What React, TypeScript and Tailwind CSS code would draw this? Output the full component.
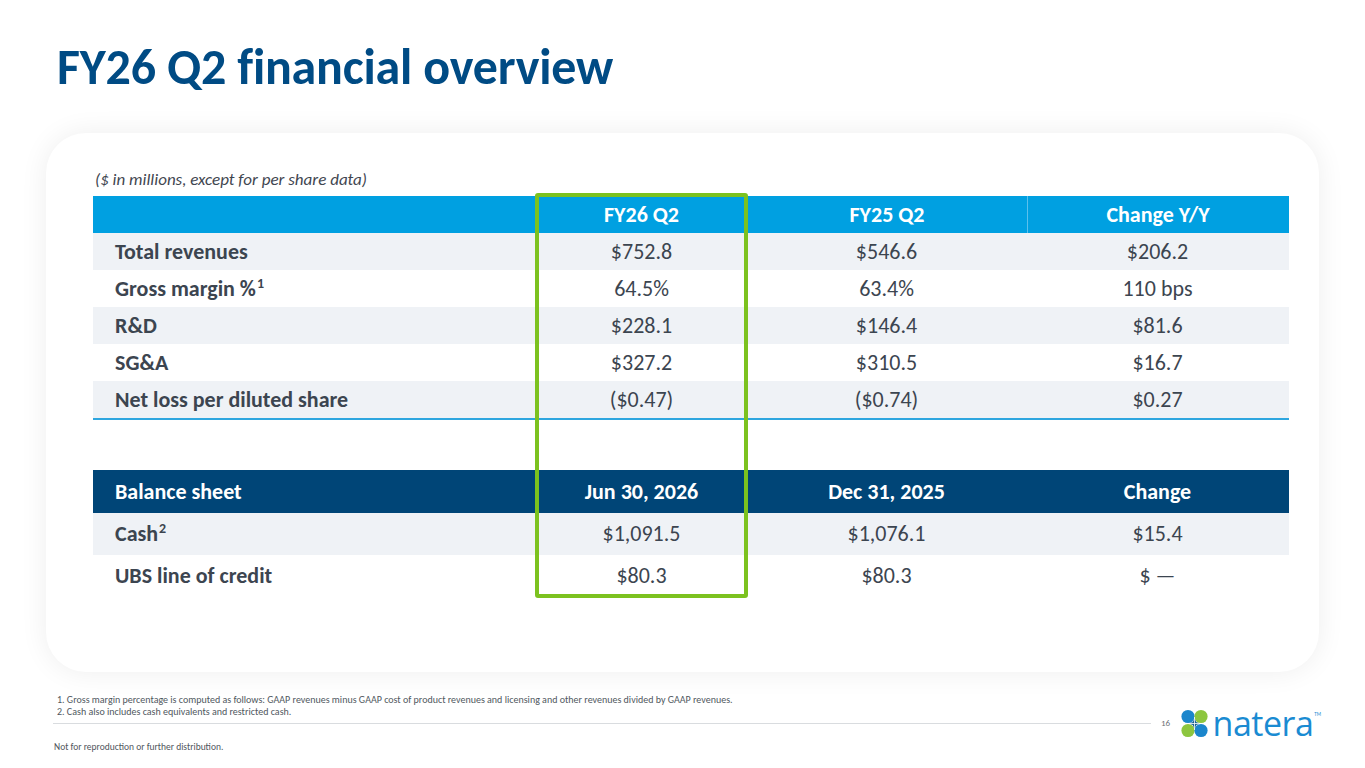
import React from "react";

const FONT = { fontFamily: "Carlito, Lato, 'Open Sans', sans-serif" };

const rows1 = [
  { label: "Total revenues", sup: "", a: "$752.8", b: "$546.6", c: "$206.2", gray: true },
  { label: "Gross margin %", sup: "1", a: "64.5%", b: "63.4%", c: "110 bps", gray: false },
  { label: "R&D", sup: "", a: "$228.1", b: "$146.4", c: "$81.6", gray: true },
  { label: "SG&A", sup: "", a: "$327.2", b: "$310.5", c: "$16.7", gray: false },
  { label: "Net loss per diluted share", sup: "", a: "($0.47)", b: "($0.74)", c: "$0.27", gray: true },
];

const rows2 = [
  { label: "Cash", sup: "2", a: "$1,091.5", b: "$1,076.1", c: "$15.4", gray: true },
  { label: "UBS line of credit", sup: "", a: "$80.3", b: "$80.3", c: "$ —", gray: false },
];

function Logo() {
  return (
    <div className="flex items-center gap-[5px]">
      <svg width="27" height="29" viewBox="0 0 27 29">
        <circle cx="7" cy="7.5" r="6.6" fill="#1b86cc" />
        <circle cx="20" cy="7.5" r="6.6" fill="#8dc63f" />
        <circle cx="7" cy="21.5" r="6.6" fill="#8dc63f" />
        <circle cx="20" cy="21.5" r="6.6" fill="#1b86cc" />
        <path d="M13.5 9.5 Q17 14.5 13.5 19.5 Q10 14.5 13.5 9.5Z" fill="#155f8f" />
        <path d="M8.5 14.5 Q13.5 11 18.5 14.5 Q13.5 18 8.5 14.5Z" fill="#155f8f" />
        <line x1="13.5" y1="8" x2="13.5" y2="21" stroke="#ffffff" strokeWidth="0.8" />
        <line x1="7" y1="14.5" x2="20" y2="14.5" stroke="#ffffff" strokeWidth="0.8" />
      </svg>
      <div className="flex items-start">
        <span
          className="text-[34px] leading-[34px] text-[#1a8bd2] tracking-[-0.5px]"
          style={{ fontFamily: "'Open Sans', Lato, sans-serif", fontWeight: 500 }}
        >
          natera
        </span>
        <span className="text-[5px] leading-[5px] text-[#1a8bd2] mt-[6px] ml-[1px]">TM</span>
      </div>
    </div>
  );
}

function Label({ label, sup }: { label: string; sup: string }) {
  return (
    <div className="pl-[22px] font-bold flex items-start">
      <span>{label}</span>
      {sup && <span className="text-[14px] leading-[14px] ml-[1px] mt-[1px]">{sup}</span>}
    </div>
  );
}

export default function App() {
  return (
    <div className="w-[1365px] h-[768px] bg-white overflow-hidden flex flex-col" style={FONT}>
      <div className="h-[133px] pl-[57px] pt-[37px]">
        <h1 className="text-[50px] leading-[60px] font-bold text-[#004b84] tracking-[-0.2px]">
          FY26 Q2 financial overview
        </h1>
      </div>

      <div className="mx-[46px] h-[539px] rounded-[40px] bg-white shadow-[0_0_28px_rgba(0,0,0,0.07)] pl-[47px] pr-[30px] pt-[36px]">
        <div className="text-[17px] leading-[22px] italic text-[#3f4650] h-[27px] pl-[2px]">
          ($ in millions, except for per share data)
        </div>

        <div className="relative">
          {/* Table 1 */}
          <div className="grid grid-cols-[444px_209px_281px_261px] h-[37px] bg-[#00a0e1] text-white font-bold text-[22px] items-center">
            <div></div>
            <div className="text-center">FY26 Q2</div>
            <div className="text-center border-l border-[#5cc0ec] h-full flex items-center justify-center">FY25 Q2</div>
            <div className="text-center border-l border-[#5cc0ec] h-full flex items-center justify-center">Change Y/Y</div>
          </div>
          {rows1.map((r) => (
            <div
              key={r.label}
              className={
                "grid grid-cols-[444px_209px_281px_261px] h-[37px] items-center text-[22px] leading-[26px] text-[#3c4550] " +
                (r.gray ? "bg-[#eff2f6]" : "bg-white")
              }
            >
              <Label label={r.label} sup={r.sup} />
              <div className="text-center">{r.a}</div>
              <div className="text-center">{r.b}</div>
              <div className="text-center">{r.c}</div>
            </div>
          ))}
          <div className="h-[2px] bg-[#2ea6df]"></div>

          <div className="h-[50px]"></div>

          {/* Table 2 */}
          <div className="grid grid-cols-[444px_209px_281px_261px] h-[43px] bg-[#004577] text-white font-bold text-[22px] items-center">
            <div className="pl-[22px]">Balance sheet</div>
            <div className="text-center">Jun 30, 2026</div>
            <div className="text-center">Dec 31, 2025</div>
            <div className="text-center">Change</div>
          </div>
          {rows2.map((r) => (
            <div
              key={r.label}
              className={
                "grid grid-cols-[444px_209px_281px_261px] h-[42px] items-center text-[22px] leading-[26px] text-[#3c4550] " +
                (r.gray ? "bg-[#eff2f6]" : "bg-white")
              }
            >
              <Label label={r.label} sup={r.sup} />
              <div className="text-center">{r.a}</div>
              <div className="text-center">{r.b}</div>
              <div className="text-center">{r.c}</div>
            </div>
          ))}

          {/* Highlight box */}
          <div className="absolute left-[442px] top-[-3px] w-[213px] h-[405px] border-[4px] border-[#7cc21f] rounded-[3px] pointer-events-none"></div>
        </div>
      </div>

      <div className="pl-[57px] pt-[22px] text-[10px] leading-[12px] text-[#505860]">
        <div>1. Gross margin percentage is computed as follows: GAAP revenues minus GAAP cost of product revenues and licensing and other revenues divided by GAAP revenues.</div>
        <div>2. Cash also includes cash equivalents and restricted cash.</div>
      </div>

      <div className="flex items-center pl-[53px] pr-[44px] mt-[-12px]">
        <div className="flex-1 h-px bg-[#d9dcdf]"></div>
        <div className="w-[30px] text-[9px] text-[#6a6f75] text-center">16</div>
        <Logo />
      </div>

      <div className="pl-[54px] mt-[1px] text-[9.5px] leading-[12px] text-[#4f555c]">
        Not for reproduction or further distribution.
      </div>
    </div>
  );
}
